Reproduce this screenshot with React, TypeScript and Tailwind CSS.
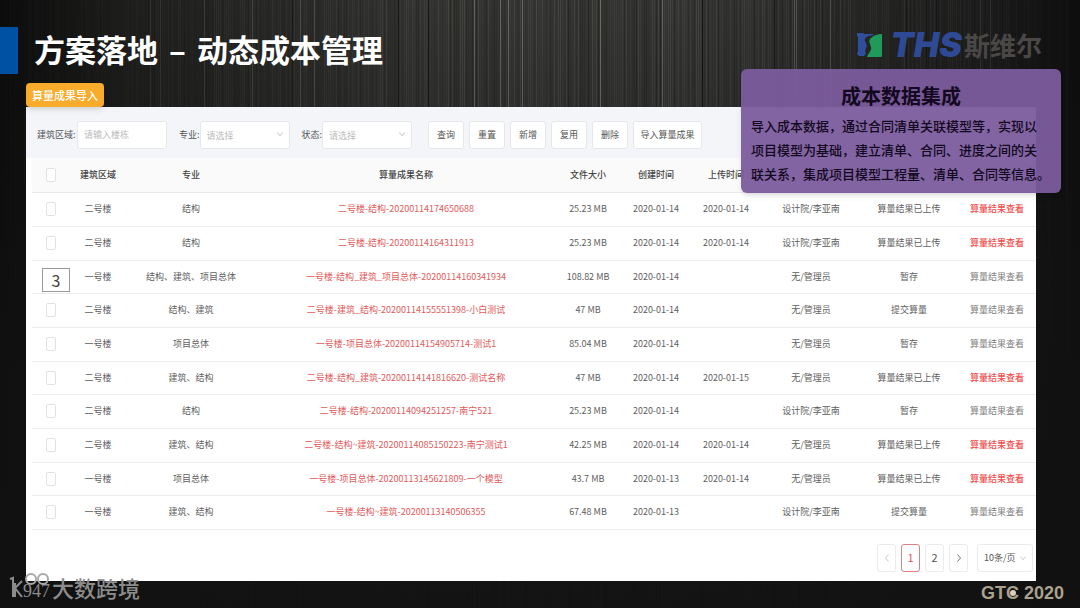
import React from 'react';

type Row = {
  area: string;
  major: string;
  name: string;
  size: string;
  created: string;
  uploaded: string;
  owner: string;
  status: string;
  viewable: boolean;
  mark?: string;
};

const rows: Row[] = [
  { area: '二号楼', major: '结构', name: '二号楼-结构-20200114174650688', size: '25.23 MB', created: '2020-01-14', uploaded: '2020-01-14', owner: '设计院/李亚南', status: '算量结果已上传', viewable: true },
  { area: '二号楼', major: '结构', name: '二号楼-结构-20200114164311913', size: '25.23 MB', created: '2020-01-14', uploaded: '2020-01-14', owner: '设计院/李亚南', status: '算量结果已上传', viewable: true },
  { area: '一号楼', major: '结构、建筑、项目总体', name: '一号楼-结构_建筑_项目总体-20200114160341934', size: '108.82 MB', created: '2020-01-14', uploaded: '', owner: '无/管理员', status: '暂存', viewable: false, mark: '3' },
  { area: '二号楼', major: '结构、建筑', name: '二号楼-建筑_结构-20200114155551398-小白测试', size: '47 MB', created: '2020-01-14', uploaded: '', owner: '无/管理员', status: '提交算量', viewable: false },
  { area: '一号楼', major: '项目总体', name: '一号楼-项目总体-20200114154905714-测试1', size: '85.04 MB', created: '2020-01-14', uploaded: '', owner: '无/管理员', status: '暂存', viewable: false },
  { area: '二号楼', major: '建筑、结构', name: '二号楼-结构_建筑-20200114141816620-测试名称', size: '47 MB', created: '2020-01-14', uploaded: '2020-01-15', owner: '无/管理员', status: '算量结果已上传', viewable: true },
  { area: '二号楼', major: '结构', name: '二号楼-结构-20200114094251257-南宁521', size: '25.23 MB', created: '2020-01-14', uploaded: '', owner: '设计院/李亚南', status: '暂存', viewable: false },
  { area: '二号楼', major: '建筑、结构', name: '二号楼-结构~建筑-20200114085150223-南宁测试1', size: '42.25 MB', created: '2020-01-14', uploaded: '2020-01-14', owner: '无/管理员', status: '算量结果已上传', viewable: true },
  { area: '一号楼', major: '项目总体', name: '一号楼-项目总体-20200113145621809-一个模型', size: '43.7 MB', created: '2020-01-13', uploaded: '2020-01-14', owner: '无/管理员', status: '算量结果已上传', viewable: true },
  { area: '一号楼', major: '建筑、结构', name: '一号楼-结构~建筑-20200113140506355', size: '67.48 MB', created: '2020-01-13', uploaded: '', owner: '设计院/李亚南', status: '提交算量', viewable: false },
];

const headers = ['建筑区域', '专业', '算量成果名称', '文件大小', '创建时间', '上传时间'];
const actions = ['查询', '重置', '新增', '复用', '删除'];

// Brushed metal: one thin vertical line every few units, with uneven strength
const streaks = Array.from({ length: 540 }, (_, i) => {
  const r = Math.abs(Math.sin(i * 127.1) * 43758.5453) % 1;
  const s = Math.abs(Math.sin(i * 311.7) * 24634.6345) % 1;
  const x = i * 2;
  const centre = Math.max(0.15, 1 - Math.abs(x - 580) / 600);
  return { x, light: r > 0.4, opacity: (s > 0.95 ? 0.35 : 0.14 * s) * centre };
});

const Backdrop: React.FC = () => (
  <svg className="absolute inset-0 h-full w-full" viewBox="0 0 1080 608" preserveAspectRatio="none" aria-hidden="true">
    <defs>
      <linearGradient id="glow" x1="0" y1="0" x2="1" y2="0">
        <stop offset="0" stopColor="#0c0c0c" />
        <stop offset="0.12" stopColor="#1e1e1d" />
        <stop offset="0.4" stopColor="#333331" />
        <stop offset="0.66" stopColor="#333331" />
        <stop offset="0.9" stopColor="#1d1d1d" />
        <stop offset="1" stopColor="#0e0e0e" />
      </linearGradient>
      <linearGradient id="fade" x1="0" y1="0" x2="0" y2="1">
        <stop offset="0" stopColor="#111111" stopOpacity="0" />
        <stop offset="0.2" stopColor="#111111" stopOpacity="0.2" />
        <stop offset="0.6" stopColor="#111111" stopOpacity="0.8" />
        <stop offset="1" stopColor="#111111" stopOpacity="0.95" />
      </linearGradient>
    </defs>
    <rect width="1080" height="608" fill="url(#glow)" />
    {streaks.map(({ x, light, opacity }) => (
      <rect key={x} x={x} y="0" width="1" height="608" fill={light ? '#e0e0d8' : '#000000'} fillOpacity={light ? opacity : opacity * 2} />
    ))}
    <rect width="1080" height="608" fill="url(#fade)" />
  </svg>
);

const Chevron: React.FC<{ className: string; d: string }> = ({ className, d }) => (
  <svg className={className} viewBox="0 0 8 8" fill="none" stroke="currentColor" aria-hidden="true">
    <path d={d} />
  </svg>
);

const down = 'M1.5 2.5 4 5.8 6.5 2.5';

const SelectBox: React.FC<{ id: string; label: string }> = ({ id, label }) => (
  <div className="ml-3 flex items-center">
    <label htmlFor={id} className="text-[9px] whitespace-nowrap text-[#555]">{label}:</label>
    <div className="relative">
      <select id={id} className="h-7 w-[90px] appearance-none rounded-[3px] border border-[#e6e7ea] bg-white px-1.5 text-[9px] text-[#bbb]">
        <option>请选择</option>
      </select>
      <Chevron className="pointer-events-none absolute top-2.5 right-1.5 size-2 text-[#c4c4c4]" d={down} />
    </div>
  </div>
);

const Logo: React.FC = () => (
  <div className="flex h-9 items-center">
    <svg className="h-[26px] w-7" viewBox="0 0 28 26" aria-hidden="true">
      <path d="M1 1H7L8 2H18L17 3C12 4 8 5 9 9C10 12 12 13 10 16C9 18 9 20 10 22L8 24H3L1 22L2 19V5L1 4Z" fill="#2f4f9c" />
      <path d="M26 2V24L25 25H11C12 21 16 19 15 15C14 11 12 9 15 6C18 3 22 2 26 2Z" fill="#1f9a5a" />
    </svg>
    <span className="ml-1.5 font-['Inter'] text-[34px] leading-9 font-black text-[#2f4a94] italic">THS</span>
    <span className="ml-0.5 text-[26px] leading-9 font-bold text-[#4b4747]">斯维尔</span>
  </div>
);

const FilterBar: React.FC = () => (
  <form className="flex h-[51px] items-center bg-[#f3f5f8] pt-1 pl-[11px]">
    <label htmlFor="area" className="mr-1 w-9 text-[9px] whitespace-nowrap text-[#555]">建筑区域:</label>
    <input id="area" placeholder="请输入楼栋" className="h-7 w-[90px] rounded-[3px] border border-[#e6e7ea] bg-white px-1.5 text-[9px] placeholder:text-[#bbb]" />
    <SelectBox id="major" label="专业" />
    <SelectBox id="status" label="状态" />
    <div className="ml-4 flex gap-[5px]">
      {actions.map((text) => (
        <button key={text} type="button" className="h-7 w-9 rounded-[3px] border border-[#e6e7ea] bg-white text-[9px] text-[#555]">{text}</button>
      ))}
      <button type="button" className="h-7 w-[69px] rounded-[3px] border border-[#e6e7ea] bg-white text-[9px] text-[#555]">导入算量成果</button>
    </div>
  </form>
);

const tick = 'block h-3.5 w-2.5 appearance-none rounded-[2px] border border-[#e2e2e2] bg-white';

const ResultTable: React.FC = () => (
  <table className="w-full table-fixed border-collapse text-center text-[9px] leading-3 whitespace-nowrap text-[#606060]">
    <colgroup>
      <col className="w-10" />
      <col className="w-[52px]" />
      <col className="w-[134px]" />
      <col className="w-[296px]" />
      <col className="w-[68px]" />
      <col className="w-[68px]" />
      <col className="w-[72px]" />
      <col className="w-[98px]" />
      <col className="w-[98px]" />
      <col className="w-[78px]" />
    </colgroup>
    <thead>
      <tr className="h-[34px] border-b border-[#ebebeb] bg-[#fafafa] text-[#444]">
        <th className="pl-3.5"><input type="checkbox" aria-label="全选" className={tick} /></th>
        {headers.map((text) => (
          <th key={text} className="font-medium">{text}</th>
        ))}
        <th colSpan={3} />
      </tr>
    </thead>
    <tbody>
      {rows.map((row) => (
        <tr key={row.name} className="h-[34px] border-b border-[#ececec] nth-[3n]:h-[33px]">
          <td className={row.mark ? 'pt-1.5 pl-2.5' : 'pl-3.5'}>
            {row.mark ? (
              <span className="flex h-6 w-7 items-center justify-center border border-[#999] bg-white text-base text-[#444]">{row.mark}</span>
            ) : (
              <input type="checkbox" aria-label={row.name} className={tick} />
            )}
          </td>
          <td>{row.area}</td>
          <td>{row.major}</td>
          <td><a href="#result" className="text-[#e25a5a]">{row.name}</a></td>
          <td>{row.size}</td>
          <td>{row.created}</td>
          <td>{row.uploaded}</td>
          <td>{row.owner}</td>
          <td>{row.status}</td>
          <td><a href="#view" className={row.viewable ? 'font-medium text-[#f25050]' : 'text-[#808080]'}>算量结果查看</a></td>
        </tr>
      ))}
    </tbody>
  </table>
);

const Pagination: React.FC = () => (
  <nav className="flex justify-end gap-[5px] pt-3.5 pr-[3px] pb-[9px] text-[11px] text-[#555]">
    <button type="button" aria-label="上一页" className="flex h-7 w-[19px] items-center justify-center rounded-[3px] border border-[#ebebeb]">
      <Chevron className="size-2 text-[#c8c8c8]" d="M5.5 0.5 2.5 4 5.5 7.5" />
    </button>
    <button type="button" className="h-7 w-[19px] rounded-[3px] border border-[#e08080] text-[#dc5a5a]">1</button>
    <button type="button" className="h-7 w-[19px] rounded-[3px] border border-[#ebebeb]">2</button>
    <button type="button" aria-label="下一页" className="flex h-7 w-[19px] items-center justify-center rounded-[3px] border border-[#ebebeb]">
      <Chevron className="size-2 text-[#777]" d="M2.5 0.5 5.5 4 2.5 7.5" />
    </button>
    <div className="relative ml-1">
      <select aria-label="每页条数" className="h-7 w-14 appearance-none rounded-[3px] border border-[#ebebeb] bg-white pl-1.5 text-[9px]">
        <option>10条/页</option>
      </select>
      <Chevron className="pointer-events-none absolute top-2.5 right-1.5 size-2 text-[#ccc]" d={down} />
    </div>
  </nav>
);

const App: React.FC = () => {
  return (
    <div className="relative min-h-screen overflow-hidden bg-[#121212] font-['Noto_Sans_CJK_SC',sans-serif]">
      <Backdrop />
      <div className="relative flex min-h-screen flex-col">
        <header className="flex items-start justify-between pt-[27px] pr-[38px]">
          <div className="flex">
            <div className="h-[47px] w-[18px] bg-[#0050a4]" />
            <h1 className="ml-4 text-[31px] leading-[43px] font-bold text-white">
              方案落地<span className="mx-1"> – </span>动态成本管理
            </h1>
          </div>
          <Logo />
        </header>

        <main className="relative mr-11 ml-[26px] pt-[9px]">
          <h2 className="relative z-10 flex h-6 w-[78px] items-center justify-center rounded bg-[#f9ab2b] text-[11px] font-medium text-white shadow-md">算量成果导入</h2>
          <section className="bg-white">
            <FilterBar />
            <div className="pl-1.5"><ResultTable /></div>
            <Pagination />
          </section>
          <aside className="absolute -top-[5px] -right-[25px] w-80 rounded-md bg-[#7b5c9d]/95 px-2.5 pt-[13px] pb-[7px] text-[#120820] shadow-md">
            <h2 className="text-center text-xl leading-7 font-bold">成本数据集成</h2>
            <p className="mt-1 text-[13px] leading-6 font-medium whitespace-nowrap">
              导入成本数据，通过合同清单关联模型等，实现以<br />
              项目模型为基础，建立清单、合同、进度之间的关<br />
              联关系，集成项目模型工程量、清单、合同等信息。
            </p>
          </aside>
        </main>

        <footer className="relative -mt-2 flex items-start justify-between pr-4 pl-[9px]">
          <div className="flex items-center text-[#8c8c8c]">
            <svg className="h-7 w-3.5" viewBox="0 0 14 28" fill="none" stroke="currentColor" strokeWidth="2" aria-hidden="true">
              <path d="M1 6 4 5V24M13 8 6 15 13 24M6 10V24" />
            </svg>
            <div className="relative h-7 w-[29px]">
              <svg className="absolute top-0 left-0.5 h-3 w-6" viewBox="0 0 24 12" fill="none" stroke="#a8a8a8" strokeWidth="2" aria-hidden="true">
                <circle cx="6" cy="6" r="5" />
                <circle cx="18" cy="6" r="5" />
              </svg>
              <span className="block pt-2 font-['Liberation_Serif'] text-lg leading-5">947</span>
            </div>
            <span className="text-[22px] leading-7 font-medium">大数跨境</span>
          </div>
          <div className="pt-2 font-['Liberation_Sans'] text-lg leading-6 font-bold text-[#aaa28e]">
            GT
            <span className="relative">
              C
              <span className="absolute top-[7px] left-1 size-1.5 rounded-full bg-[#d8cfc0]" />
            </span>{' '}
            2020
          </div>
        </footer>
      </div>
    </div>
  );
};

export default App;
